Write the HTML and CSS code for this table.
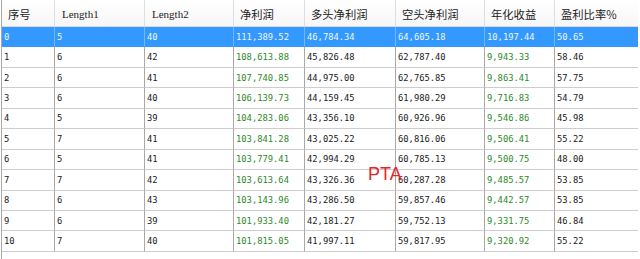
FILE: index.html
```html
<!DOCTYPE html>
<html>
<head>
<meta charset="utf-8">
<link rel="stylesheet" href="styles.css">
</head>
<body>
<div class="grid">
  <div class="row head">
    <div class="c c1 cjk">序号</div>
    <div class="c c2 serif">Length1</div>
    <div class="c c3 serif">Length2</div>
    <div class="c c4 cjk">净利润</div>
    <div class="c c5 cjk">多头净利润</div>
    <div class="c c6 cjk">空头净利润</div>
    <div class="c c7 cjk">年化收益</div>
    <div class="c c8 cjk">盈利比率%</div>
  </div>
  <div class="row sel">
    <div class="c c1">0</div><div class="c c2">5</div><div class="c c3">40</div><div class="c c4 g">111,389.52</div><div class="c c5">46,784.34</div><div class="c c6">64,605.18</div><div class="c c7 g">10,197.44</div><div class="c c8">50.65</div>
  </div>
  <div class="row">
    <div class="c c1">1</div><div class="c c2">6</div><div class="c c3">42</div><div class="c c4 g">108,613.88</div><div class="c c5">45,826.48</div><div class="c c6">62,787.40</div><div class="c c7 g">9,943.33</div><div class="c c8">58.46</div>
  </div>
  <div class="row">
    <div class="c c1">2</div><div class="c c2">6</div><div class="c c3">41</div><div class="c c4 g">107,740.85</div><div class="c c5">44,975.00</div><div class="c c6">62,765.85</div><div class="c c7 g">9,863.41</div><div class="c c8">57.75</div>
  </div>
  <div class="row">
    <div class="c c1">3</div><div class="c c2">6</div><div class="c c3">40</div><div class="c c4 g">106,139.73</div><div class="c c5">44,159.45</div><div class="c c6">61,980.29</div><div class="c c7 g">9,716.83</div><div class="c c8">54.79</div>
  </div>
  <div class="row">
    <div class="c c1">4</div><div class="c c2">5</div><div class="c c3">39</div><div class="c c4 g">104,283.06</div><div class="c c5">43,356.10</div><div class="c c6">60,926.96</div><div class="c c7 g">9,546.86</div><div class="c c8">45.98</div>
  </div>
  <div class="row">
    <div class="c c1">5</div><div class="c c2">7</div><div class="c c3">41</div><div class="c c4 g">103,841.28</div><div class="c c5">43,025.22</div><div class="c c6">60,816.06</div><div class="c c7 g">9,506.41</div><div class="c c8">55.22</div>
  </div>
  <div class="row">
    <div class="c c1">6</div><div class="c c2">5</div><div class="c c3">41</div><div class="c c4 g">103,779.41</div><div class="c c5">42,994.29</div><div class="c c6">60,785.13</div><div class="c c7 g">9,500.75</div><div class="c c8">48.00</div>
  </div>
  <div class="row">
    <div class="c c1">7</div><div class="c c2">7</div><div class="c c3">42</div><div class="c c4 g">103,613.64</div><div class="c c5">43,326.36</div><div class="c c6">60,287.28</div><div class="c c7 g">9,485.57</div><div class="c c8">53.85</div>
  </div>
  <div class="row">
    <div class="c c1">8</div><div class="c c2">6</div><div class="c c3">43</div><div class="c c4 g">103,143.96</div><div class="c c5">43,286.50</div><div class="c c6">59,857.46</div><div class="c c7 g">9,442.57</div><div class="c c8">53.85</div>
  </div>
  <div class="row">
    <div class="c c1">9</div><div class="c c2">6</div><div class="c c3">39</div><div class="c c4 g">101,933.40</div><div class="c c5">42,181.27</div><div class="c c6">59,752.13</div><div class="c c7 g">9,331.75</div><div class="c c8">46.84</div>
  </div>
  <div class="row">
    <div class="c c1">10</div><div class="c c2">7</div><div class="c c3">40</div><div class="c c4 g">101,815.05</div><div class="c c5">41,997.11</div><div class="c c6">59,817.95</div><div class="c c7 g">9,320.92</div><div class="c c8">55.22</div>
  </div>
  <div class="mark">PTA</div>
</div>
</body>
</html>
```
FILE: styles.css
```css
html, body {
  margin: 0;
  padding: 0;
  background: #ffffff;
}
body {
  width: 640px;
  height: 259px;
  overflow: hidden;
}
.grid {
  position: relative;
  margin-left: 1px;
  width: 637px;
  height: 259px;
  border-left: 1px solid #a9a9a9;
  box-sizing: border-box;
}
.row {
  display: flex;
  height: 20.45px;
}
.c {
  box-sizing: border-box;
  height: 100%;
  border-right: 1px solid #a8a8a8;
  border-bottom: 1px solid #cdcdcd;
  padding-left: 2px;
  display: flex;
  align-items: center;
  white-space: nowrap;
  overflow: hidden;
  font-family: "DejaVu Sans Mono", monospace;
  font-size: 8.8px;
  color: #1a1a1a;
}
.c1 { width: 53px; }
.c2 { width: 90px; }
.c3 { width: 89px; }
.c4 { width: 71px; }
.c5 { width: 91px; }
.c6 { width: 89px; }
.c7 { width: 70px; }
.c8 { flex: 1; border-right: none; }
.g { color: #2b8a2b; }

.head {
  height: 27px;
  background: linear-gradient(#ffffff, #f6f6f6);
}
.head .c {
  padding-left: 6px;
  border-right-color: #dedede;
  border-bottom-color: #d8d8d8;
  color: #222;
  padding-top: 1px;
}
.head .c8 { border-right: none; }
.head .cjk {
  font-family: "Noto Sans CJK SC", sans-serif;
  font-size: 11.3px;
}
.head .serif {
  font-family: "Liberation Serif", serif;
  font-size: 11px;
  padding-left: 7px;
}
.sel .c {
  background: #3399ff;
  color: #eef6ff;
  border-right-color: #72b6f8;
  border-bottom-color: #3399ff;
}
.sel .c8 { border-right: none; }
.mark {
  position: absolute;
  left: 366px;
  top: 165px;
  font-family: "Liberation Sans", sans-serif;
  font-size: 18px;
  line-height: 18px;
  color: #e8262a;
}
```
